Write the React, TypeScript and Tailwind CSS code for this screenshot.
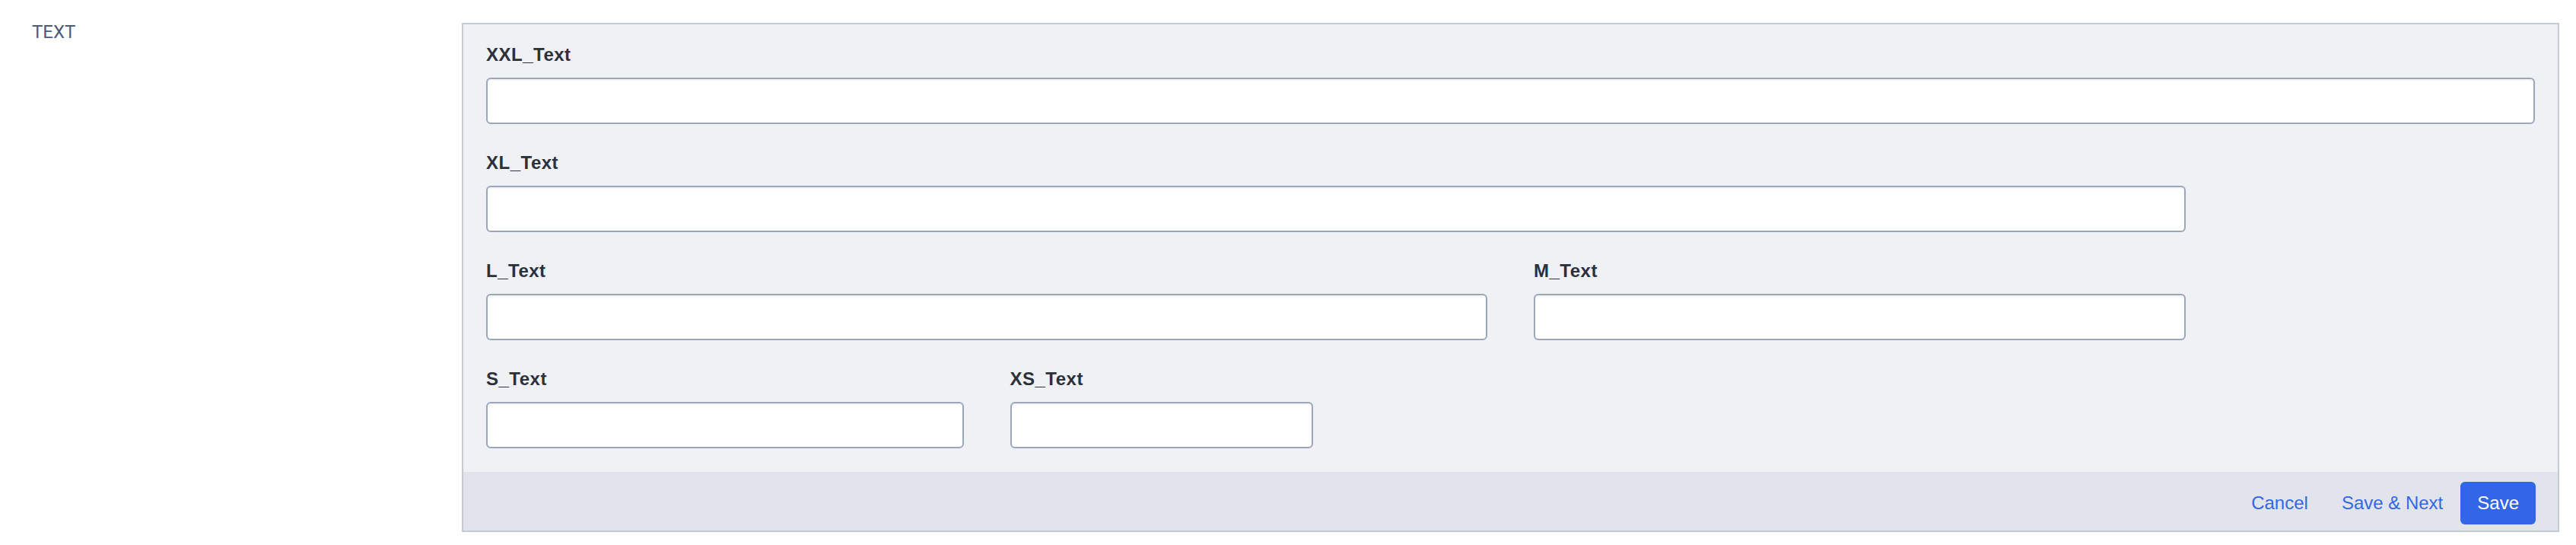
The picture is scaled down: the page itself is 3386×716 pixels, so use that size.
import type React from "react";

interface Field {
	label: string;
	span: string;
}

const fields: Field[] = [
	{ label: "XXL_Text", span: "col-span-12" },
	{ label: "XL_Text", span: "col-span-10 col-start-1" },
	{ label: "L_Text", span: "col-span-6 col-start-1" },
	{ label: "M_Text", span: "col-span-4" },
	{ label: "S_Text", span: "col-span-3 col-start-1" },
	{ label: "XS_Text", span: "col-span-2" },
];

const TextField: React.FC<Field> = ({ label, span }) => (
	<div className={`${span} flex flex-col`}>
		<label className="text-[24px] leading-[36px] font-bold tracking-[0.5px] text-[#2b303b]">
			{label}
		</label>
		<input
			type="text"
			className="mt-[12px] h-[61px] w-full rounded-[6px] border-2 border-[#9ba6ba] bg-white px-3 shadow-[inset_0_2px_2px_rgba(0,0,0,0.05)] outline-none"
		/>
	</div>
);

const App: React.FC = () => {
	return (
		<div
			className="min-h-[716px] w-full bg-white flex pt-[30px] pr-[22px]"
			style={{ fontFamily: '"Liberation Sans", Arial, sans-serif' }}
		>
			<div className="w-[607px] shrink-0 pl-[42px]">
				<span
					className="text-[24px] leading-[24px] text-[#4d5b78]"
					style={{ fontFamily: "Roboto, sans-serif" }}
				>
					TEXT
				</span>
			</div>
			<div className="flex-1 self-start border-2 border-[#c5cad5] bg-[#eff1f5]">
				<div className="grid grid-cols-12 gap-x-[61px] gap-y-[33px] px-[30px] pt-[22px] pb-[31px]">
					{fields.map((f) => (
						<TextField key={f.label} {...f} />
					))}
				</div>
				<div className="h-[77px] bg-[#e1e4ea] flex items-start justify-end pt-[13px] pr-[29px]">
					<button
						type="button"
						className="h-[56px] px-[22px] text-[24px] text-[#3467e2]"
					>
						Cancel
					</button>
					<button
						type="button"
						className="h-[56px] px-[22px] text-[24px] text-[#3467e2]"
					>
						Save &amp; Next
					</button>
					<button
						type="button"
						className="h-[56px] px-[22px] ml-px rounded-[6px] bg-[#3366e6] text-[24px] text-white"
					>
						Save
					</button>
				</div>
			</div>
		</div>
	);
};

export default App;
